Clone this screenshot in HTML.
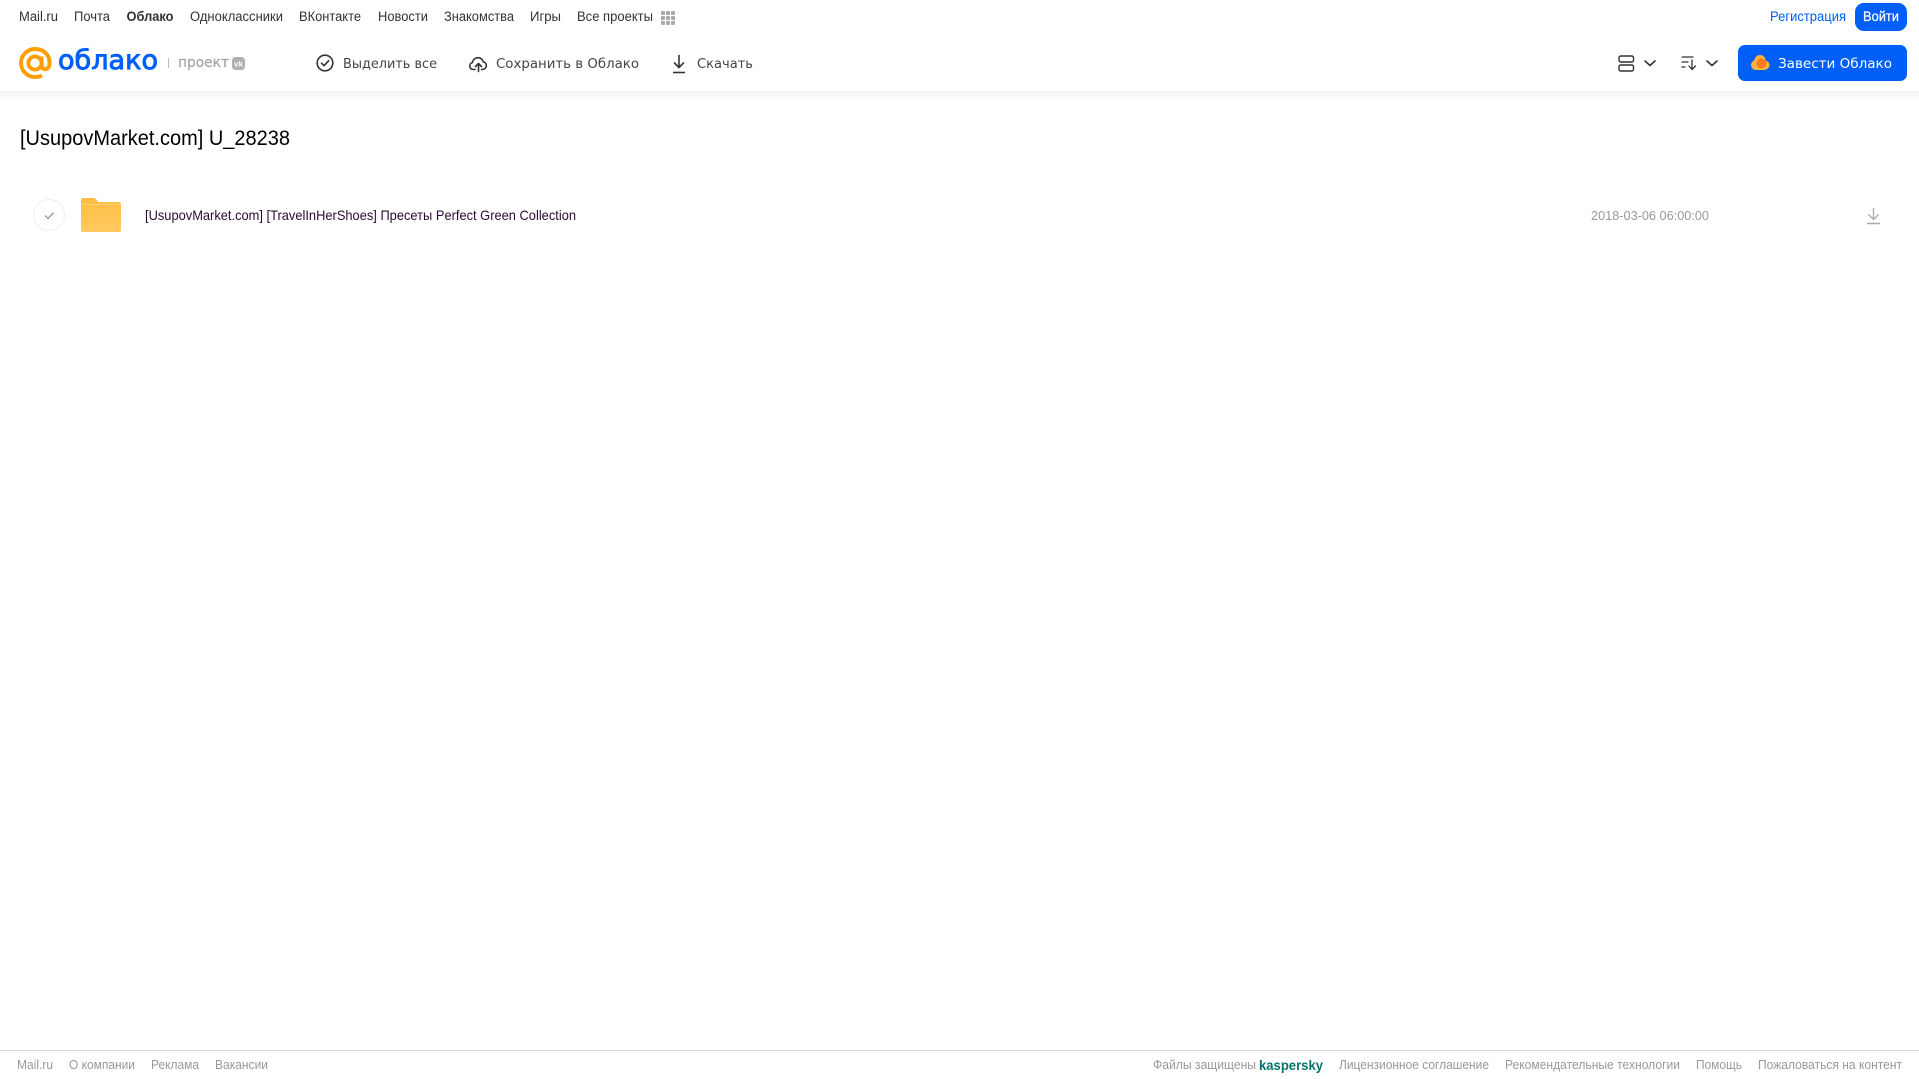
<!DOCTYPE html>
<html lang="ru"><head><meta charset="utf-8"><title>Облако</title>
<style>
html,body{margin:0;padding:0;background:#fff;width:1919px;height:1079px;overflow:hidden}
svg{display:block}
text{font-family:"Liberation Sans",sans-serif;white-space:pre}
.n{font-size:13.5px;fill:#333}
.t{font-family:"DejaVu Sans",sans-serif;font-size:13.5px;fill:#444}
.f{font-size:12.5px;fill:#999}
</style></head><body>
<svg width="1919" height="1079" viewBox="0 0 1919 1079" xmlns="http://www.w3.org/2000/svg">
<defs>
<linearGradient id="sh" x1="0" y1="0" x2="0" y2="1"><stop offset="0" stop-color="#f1f1f1"/><stop offset="1" stop-color="#fff"/></linearGradient>
<linearGradient id="fo" x1="0" y1="0" x2="0" y2="1"><stop offset="0" stop-color="#ffbd45"/><stop offset="1" stop-color="#ffc95f"/></linearGradient>
</defs>
<rect x="0" y="91" width="1919" height="8" fill="url(#sh)"/>

<!-- top nav -->
<g class="n">
<text class="n" x="19" y="21" textLength="39" lengthAdjust="spacingAndGlyphs">Mail.ru</text>
<text class="n" x="74" y="21" textLength="36" lengthAdjust="spacingAndGlyphs">Почта</text>
<text class="n" x="126.500" y="21" textLength="47" lengthAdjust="spacingAndGlyphs" font-weight="700">Облако</text>
<text class="n" x="190" y="21" textLength="93" lengthAdjust="spacingAndGlyphs">Одноклассники</text>
<text class="n" x="299" y="21" textLength="62" lengthAdjust="spacingAndGlyphs">ВКонтакте</text>
<text class="n" x="378" y="21" textLength="50" lengthAdjust="spacingAndGlyphs">Новости</text>
<text class="n" x="444" y="21" textLength="70" lengthAdjust="spacingAndGlyphs">Знакомства</text>
<text class="n" x="530" y="21" textLength="31" lengthAdjust="spacingAndGlyphs">Игры</text>
<text class="n" x="577" y="21" textLength="76" lengthAdjust="spacingAndGlyphs">Все проекты</text>
</g>
<g fill="#aaa">
<rect x="661" y="11" width="4" height="4" rx="1"/><rect x="666" y="11" width="4" height="4" rx="1"/><rect x="671" y="11" width="4" height="4" rx="1"/>
<rect x="661" y="16" width="4" height="4" rx="1"/><rect x="666" y="16" width="4" height="4" rx="1"/><rect x="671" y="16" width="4" height="4" rx="1"/>
<rect x="661" y="21" width="4" height="4" rx="1"/><rect x="666" y="21" width="4" height="4" rx="1"/><rect x="671" y="21" width="4" height="4" rx="1"/>
</g>
<text x="1770" y="21" font-size="13.500" fill="#005ff9" textLength="76" lengthAdjust="spacingAndGlyphs">Регистрация</text>
<rect x="1855" y="3" width="52" height="28" rx="9" fill="#005ff9"/>
<text x="1863" y="21" font-size="13.500" fill="#fff" stroke="#fff" stroke-width=".25" textLength="36" lengthAdjust="spacingAndGlyphs">Войти</text>

<!-- logo -->
<g fill="none" stroke="#ff9e00" stroke-width="3.900">
<circle cx="35" cy="63" r="6.600"/>
<path d="M41.600 56.500V65c0 6 8 6 8-2 0-8.500-6.300-14-14.600-14-8 0-14 6.500-14 14 0 8 6.500 14 14 14 3 0 5-.5 7-1.600"/>
</g>
<text x="58" y="69" style="font-family:'DejaVu Sans',sans-serif" font-size="26.500" fill="#005ff9" stroke="#005ff9" stroke-width=".9" textLength="100" lengthAdjust="spacingAndGlyphs">облако</text>
<rect x="168" y="58" width="1" height="10" fill="#bbb"/>
<text x="178" y="67" style="font-family:'DejaVu Sans',sans-serif" font-size="14" fill="#a6a6a6" stroke="#a6a6a6" stroke-width=".25" textLength="51" lengthAdjust="spacingAndGlyphs">проект</text>
<rect x="232" y="57" width="13" height="13" rx="3.500" fill="#b0b0b0"/>
<text x="234" y="66.500" font-size="7" font-weight="700" fill="#fff" textLength="9" lengthAdjust="spacingAndGlyphs">vk</text>

<!-- toolbar -->
<g fill="none" stroke="#333" stroke-width="1.600" stroke-linecap="round" stroke-linejoin="round">
<circle cx="325" cy="63" r="7.800"/>
<path d="M321.500 63.200l2.600 2.500 4.600-5"/>
<path d="M475 69.500h-1.500c-4.500 0-5-6-1-7 .5-4.500 6.500-6.500 9.500-3 .8 1 1 1.500 1.400 2.500 3.600.3 4.300 6.500-.4 7.500h-1.500"/>
<path d="M478.500 71.500v-8M475.500 66.500l3-3 3 3"/>
<path d="M679 55.500v12M674.500 63l4.500 4.500 4.500-4.500"/>
<path d="M673 72.500h12" stroke-linecap="butt"/>
<rect x="1619" y="56" width="14.500" height="6" rx="1.800" stroke-width="1.400"/>
<rect x="1619" y="65" width="14.500" height="6" rx="1.800" stroke-width="1.400"/>
<path d="M1645 61l5 4.500 5-4.500"/>
<path d="M1682 57h11M1682 62h6M1682 67h3M1692 60v9M1689 66l3 3.500 3.500-3.500" stroke-width="1.300"/>
<path d="M1707 61l5 4.500 5-4.500"/>
</g>
<text class="t" x="343" y="68" textLength="94" lengthAdjust="spacingAndGlyphs">Выделить все</text>
<text class="t" x="496" y="68" textLength="143" lengthAdjust="spacingAndGlyphs">Сохранить в Облако</text>
<text class="t" x="697" y="68" textLength="56" lengthAdjust="spacingAndGlyphs">Скачать</text>

<!-- CTA -->
<rect x="1738" y="45" width="169" height="36" rx="7" fill="#005ff9"/>
<circle cx="1756" cy="65" r="5" fill="#ffb43a"/>
<circle cx="1760" cy="60.500" r="5.500" fill="#ffb43a"/>
<circle cx="1765" cy="65" r="4.500" fill="#ffb43a"/>
<rect x="1753" y="62" width="15" height="8" rx="4" fill="#ffb43a"/>
<circle cx="1761.500" cy="63.500" r="5" fill="#ff7a1f"/>
<text x="1778" y="68" style="font-family:'DejaVu Sans',sans-serif" font-size="13.500" fill="#fff" textLength="114" lengthAdjust="spacingAndGlyphs">Завести Облако</text>

<!-- title -->
<text x="20" y="145" font-size="21.500" fill="#000" textLength="270" lengthAdjust="spacingAndGlyphs">[UsupovMarket.com] U_28238</text>

<!-- row -->
<circle cx="49" cy="215" r="15.500" fill="#fff" stroke="#efefef"/>
<path d="M45 215.500l3 3 5.500-6" fill="none" stroke="#999" stroke-width="1.300"/>
<path d="M81 200a2 2 0 0 1 2-2h10c2 0 3 .8 4 2.500l1 1.500h21a2 2 0 0 1 2 2v26a2 2 0 0 1-2 2H83a2 2 0 0 1-2-2z" fill="url(#fo)"/>
<rect x="81" y="204" width="40" height="1" fill="#ffd070"/>
<text x="145" y="220" font-size="14" fill="#2b0a33" textLength="431" lengthAdjust="spacingAndGlyphs">[UsupovMarket.com] [TravelInHerShoes] Пресеты Perfect Green Collection</text>
<text x="1591" y="220" font-size="13" fill="#999" textLength="118" lengthAdjust="spacingAndGlyphs">2018-03-06 06:00:00</text>
<g fill="none" stroke="#aaa" stroke-width="1.300">
<path d="M1873.500 208v11M1868.500 214.500l5 5 5-5"/>
<path d="M1867 223.500h13" stroke-width="1.500"/>
</g>

<!-- footer -->
<rect x="0" y="1050" width="1919" height="1" fill="#d9d9d9"/>
<text class="f" x="17" y="1069" textLength="36" lengthAdjust="spacingAndGlyphs">Mail.ru</text>
<text class="f" x="69" y="1069" textLength="66" lengthAdjust="spacingAndGlyphs">О компании</text>
<text class="f" x="151" y="1069" textLength="48" lengthAdjust="spacingAndGlyphs">Реклама</text>
<text class="f" x="215" y="1069" textLength="53" lengthAdjust="spacingAndGlyphs">Вакансии</text>
<text class="f" x="1153" y="1069" textLength="103" lengthAdjust="spacingAndGlyphs">Файлы защищены</text>
<text x="1259" y="1070" font-size="14" font-weight="700" fill="#00766a" textLength="64" lengthAdjust="spacingAndGlyphs">kaspersky</text>
<text class="f" x="1339" y="1069" textLength="150" lengthAdjust="spacingAndGlyphs">Лицензионное соглашение</text>
<text class="f" x="1505" y="1069" textLength="175" lengthAdjust="spacingAndGlyphs">Рекомендательные технологии</text>
<text class="f" x="1696" y="1069" textLength="46" lengthAdjust="spacingAndGlyphs">Помощь</text>
<text class="f" x="1758" y="1069" textLength="144" lengthAdjust="spacingAndGlyphs">Пожаловаться на контент</text>
</svg>
</body></html>
